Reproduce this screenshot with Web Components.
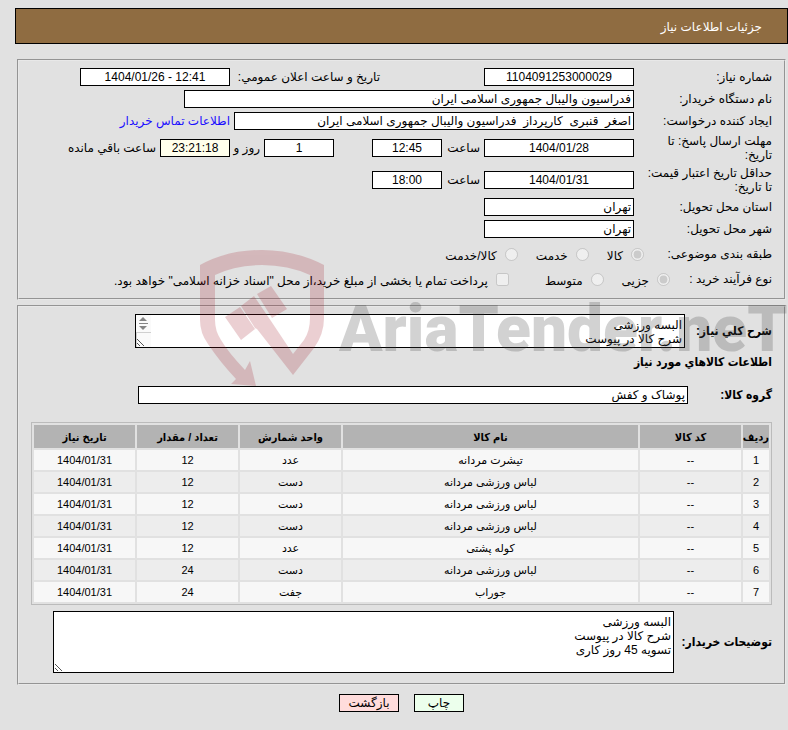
<!DOCTYPE html>
<html lang="fa" dir="rtl">
<head>
<meta charset="utf-8">
<meta name="viewport" content="width=device-width, initial-scale=1">
<title>جزئیات اطلاعات نیاز</title>
<style>
    body{
        --bold-font: Tahoma, "Liberation Sans", "DejaVu Sans Condensed", sans-serif;
        margin: 0;
        background: #e1e1e1;
        color: #000;
        font: 12px/14px Tahoma, "Liberation Sans", "DejaVu Sans", sans-serif;
    }
</style>
</head>
<body>
<need-screen></need-screen>
<script>
const define = (name, html, setup) => {
    const template = document.createElement('template')
    template.innerHTML = html
    window.customElements.define(name, class extends HTMLElement{
        constructor(){
            super()
            this._shadowRoot = this.attachShadow({mode: 'open'})
            this._shadowRoot.appendChild(template.content.cloneNode(true))
        }
        connectedCallback(){
            if(setup) setup(this, this._shadowRoot)
        }
    })
}

define('page-title', `
    <style>
        :host{
            display: block;
            background: #8f6c41;
            border: 1px solid #000;
            padding: 11px 25px 9px;
            color: #fff;
        }
        h1{
            margin: 0;
            font-size: 12px;
            font-weight: normal;
            line-height: 14px;
        }
    </style>
    <h1><slot></slot></h1>
`)

define('field-panel', `
    <style>
        :host{
            display: flex;
            flex-direction: column;
            gap: 4px;
            border: 2px groove #e8e8e8;
            padding: 7px 12px 10px;
        }
    </style>
    <slot></slot>
`)

define('field-row', `
    <style>
        :host{
            display: flex;
            align-items: center;
            gap: 4px;
            min-height: 18px;
        }
        :host([tall]){ min-height: 28px }
        :host([choices]){ gap: 0 }
        :host([category]){ min-height: 24px }
    </style>
    <slot></slot>
`)

// label + text box, label-side="after" puts the label behind the box
define('text-field', `
    <style>
        :host{
            display: flex;
            align-items: center;
            gap: 4px;
        }
        :host([label-side="after"]){ flex-direction: row-reverse }
        :host([label-side="after"]) label{ white-space: nowrap }
        :host([second]){ margin-inline-start: 100px }
        :host([remaining]){ margin-inline-start: 34px }
        :host([strong]) label{
            font-family: var(--bold-font);
            font-weight: bold;
        }
        label{
            flex: none;
            width: var(--label-width);
        }
        input{
            box-sizing: border-box;
            width: var(--field-width);
            min-width: 0;
            height: 18px;
            margin: 0;
            padding: 0 2px;
            border: 1px solid #000;
            border-radius: 0;
            background: #fff;
            color: #000;
            font: inherit;
        }
        :host([numeric]) input{
            direction: ltr;
            text-align: center;
        }
        :host([timer]) input{ background: #ffffec }
    </style>
    <label for="box"></label>
    <input id="box" type="text" readonly>
`, (host, root) => {
    root.querySelector('label').textContent = host.getAttribute('label')
    root.querySelector('input').value = host.getAttribute('value')
    host.style.setProperty('--label-width', (host.getAttribute('label-width') || 134) + 'px')
    host.style.setProperty('--field-width', (host.getAttribute('width') || 150) + 'px')
})

define('text-area', `
    <style>
        :host{
            display: flex;
            align-items: center;
            gap: 4px;
        }
        label{
            flex: none;
            width: var(--label-width);
            font-family: var(--bold-font);
            font-weight: bold;
        }
        .box{
            position: relative;
            display: flex;
            width: var(--field-width);
        }
        textarea{
            box-sizing: border-box;
            width: 100%;
            margin: 0;
            padding: 3px 2px 0;
            border: 1px solid #000;
            border-radius: 0;
            resize: none;
            overflow: hidden;
            background: #fff;
            color: #000;
            font: inherit;
        }
        svg{
            position: absolute;
            left: 1px;
            bottom: 1px;
        }
        .scroll{ display: none }
        :host([scroll]) .scroll{ display: inline }
    </style>
    <label for="box"></label>
    <div class="box">
        <textarea id="box" readonly></textarea>
        <svg width="16" height="32" viewBox="0 0 16 32" aria-hidden="true">
            <g class="scroll">
                <path d="M0 0h15v32H0z" fill="#fafafa"/>
                <path d="M0 17.500h15M.5 18v14" stroke="#d0d0d0" fill="none"/>
                <path d="M3 6L7 2l4 4zM3 11h8l-4 4z" fill="#858585"/>
                <path d="M3 8.500h9" stroke="#858585"/>
            </g>
            <path d="M1 24l7 7M1 28l3 3" stroke="#555" fill="none"/>
        </svg>
    </div>
`, (host, root) => {
    const area = root.querySelector('textarea')
    root.querySelector('label').textContent = host.getAttribute('label')
    area.value = host.getAttribute('value').split('|').join('\n')
    area.style.height = host.getAttribute('height') + 'px'
    host.style.setProperty('--label-width', host.getAttribute('label-width') + 'px')
    host.style.setProperty('--field-width', host.getAttribute('width') + 'px')
})

define('choice-item', `
    <style>
        :host{
            display: flex;
            align-items: center;
            gap: 8px;
            margin-inline-end: 18px;
        }
        :host([apart]){ margin-inline-start: 18px }
        input{
            flex: none;
            width: 13px;
            height: 13px;
            margin: 0;
        }
        label{
            padding-top: 4px;
            white-space: nowrap;
        }
    </style>
    <input id="choice" disabled>
    <label for="choice"><slot></slot></label>
`, (host, root) => {
    const input = root.querySelector('input')
    input.type = host.getAttribute('type') || 'radio'
    input.checked = host.hasAttribute('checked')
})

define('row-caption', `
    <style>
        :host{
            display: block;
            flex: none;
            width: 128px;
        }
        :host([short]){ width: 102px }
    </style>
    <slot></slot>
`)

define('section-title', `
    <style>
        :host{ display: block }
        h2{
            margin: 3px 0 13px;
            font-family: var(--bold-font);
            font-size: 12px;
            line-height: 14px;
        }
    </style>
    <h2><slot></slot></h2>
`)

define('goods-table', `
    <style>
        :host{
            display: block;
            margin: 14px 0 2px;
        }
        table{
            width: 100%;
            table-layout: fixed;
            border: 1px solid #bbb;
            border-collapse: separate;
            border-spacing: 2px;
            font-size: 11px;
            line-height: 14px;
            text-align: center;
        }
        th, td{
            padding: 0;
            height: 20px;
            background: #f7f7f7;
            white-space: nowrap;
        }
        th{
            height: 23px;
            background: #b3b3b3;
            font-family: var(--bold-font);
        }
        tbody tr:nth-child(even) td{ background: #ededed }
        .index{ width: 26px }
        .side{ width: 101px }
    </style>
    <table>
        <colgroup>
            <col class="index"><col class="side"><col><col class="side"><col class="side"><col class="side">
        </colgroup>
        <thead>
            <tr><th>ردیف</th><th>کد کالا</th><th>نام کالا</th><th>واحد شمارش</th><th>تعداد / مقدار</th><th>تاریخ نیاز</th></tr>
        </thead>
        <tbody></tbody>
    </table>
`, (host, root) => {
    const goods = [
        ['تیشرت مردانه', 'عدد', 12],
        ['لباس ورزشی مردانه', 'دست', 12],
        ['لباس ورزشی مردانه', 'دست', 12],
        ['لباس ورزشی مردانه', 'دست', 12],
        ['کوله پشتی', 'عدد', 12],
        ['لباس ورزشی مردانه', 'دست', 24],
        ['جوراب', 'جفت', 24]
    ]
    root.querySelector('tbody').innerHTML = goods.map(([name, unit, count], i) =>
        `<tr><td>${i + 1}</td><td>--</td><td>${name}</td><td>${unit}</td><td>${count}</td><td dir="ltr">1404/01/31</td></tr>`
    ).join('')
})

define('action-button', `
    <style>
        :host{ display: block }
        button{
            box-sizing: border-box;
            width: 50px;
            height: 18px;
            padding: 0;
            border: 1px solid #000;
            border-radius: 0;
            background: #ecffec;
            color: #000;
            font: inherit;
        }
        :host([back]) button{
            width: 60px;
            background: #ffdcdc;
        }
    </style>
    <button type="button"><slot></slot></button>
`)

define('tender-watermark', `
    <style>
        :host{
            position: absolute;
            left: 190px;
            right: 0;
            top: 240px;
            height: 160px;
            overflow: hidden;
            direction: ltr;
            pointer-events: none;
        }
        svg{ display: block }
        text{ font: 900 64px Roboto, "Liberation Sans", sans-serif }
    </style>
    <svg width="598" height="160" viewBox="0 0 598 160">
        <g fill="#a01423" opacity=".2">
            <path d="M10 25Q37 10 72 10Q105 10 134 25V78Q134 94 124 108L103 135L67 89L65 88L51 66L64 56L81 81L103 114L114 100Q120 91 120 78V35Q98 25 72 25Q45 25 25 35V80Q25 91 31 100Q38 112 55 130L60 121L66 146L41 144L46 139Q30 122 18 104Q10 93 10 80Z"/>
            <path d="M35 77L50 67L65 89L51 100ZM67 54L81 46L97 69L82 78Z"/>
        </g>
        <text x="149" y="111" fill="#464646" opacity=".24">AriaTender.neT</text>
    </svg>
`)

define('need-screen', `
    <style>
        :host{
            display: block;
            position: relative;
            padding: 8px 0 18px 15px;
        }
        main{
            display: flex;
            flex-direction: column;
            gap: 5px;
            margin: 15px 2px 9px;
        }
        a{
            color: #1a0dff;
            text-decoration: none;
        }
        footer{
            display: flex;
            justify-content: center;
            gap: 15px;
        }
    </style>
    <page-title>جزئیات اطلاعات نیاز</page-title>
    <main>
        <field-panel>
            <field-row>
                <text-field label="شماره نیاز:" value="1104091253000029" numeric></text-field>
                <text-field label="تاریخ و ساعت اعلان عمومي:" value="1404/01/26 - 12:41" label-width="146" numeric second></text-field>
            </field-row>
            <field-row>
                <text-field label="نام دستگاه خریدار:" value="فدراسیون والیبال جمهوری اسلامی ایران" width="450"></text-field>
            </field-row>
            <field-row>
                <text-field label="ایجاد کننده درخواست:" value="اصغر  قنبری  کارپرداز  فدراسیون والیبال جمهوری اسلامی ایران" width="400"></text-field>
                <a href="#">اطلاعات تماس خریدار</a>
            </field-row>
            <field-row tall>
                <text-field label="مهلت ارسال پاسخ: تا تاریخ:" value="1404/01/28" numeric></text-field>
                <text-field label="ساعت" value="12:45" label-width="34" width="70" numeric></text-field>
                <text-field label="روز و" value="1" label-side="after" label-width="26" width="70" numeric remaining></text-field>
                <text-field label="ساعت باقي مانده" value="23:21:18" label-side="after" label-width="100" width="70" numeric timer></text-field>
            </field-row>
            <field-row tall>
                <text-field label="حداقل تاریخ اعتبار قیمت: تا تاریخ:" value="1404/01/31" numeric></text-field>
                <text-field label="ساعت" value="18:00" label-width="34" width="70" numeric></text-field>
            </field-row>
            <field-row>
                <text-field label="استان محل تحویل:" value="تهران"></text-field>
            </field-row>
            <field-row>
                <text-field label="شهر محل تحویل:" value="تهران"></text-field>
            </field-row>
            <field-row choices category>
                <row-caption>طبقه بندی موضوعی:</row-caption>
                <choice-item checked>کالا</choice-item>
                <choice-item>خدمت</choice-item>
                <choice-item>کالا/خدمت</choice-item>
            </field-row>
            <field-row choices>
                <row-caption short>نوع فرآیند خرید :</row-caption>
                <choice-item checked>جزیی</choice-item>
                <choice-item>متوسط</choice-item>
                <choice-item type="checkbox" apart>پرداخت تمام یا بخشی از مبلغ خرید،از محل "اسناد خزانه اسلامی" خواهد بود.</choice-item>
            </field-row>
        </field-panel>
        <field-panel>
            <text-area label="شرح كلي نیاز:" value="البسه ورزشی|شرح کالا در پیوست" label-width="83" width="550" height="34" scroll></text-area>
            <section-title>اطلاعات كالاهاي مورد نیاز</section-title>
            <text-field label="گروه کالا:" value="پوشاک و کفش" label-width="80" width="550" strong></text-field>
            <goods-table></goods-table>
            <text-area label="توضیحات خریدار:" value="البسه ورزشی|شرح کالا در پیوست|تسویه 45 روز کاری" label-width="94" width="621" height="62"></text-area>
        </field-panel>
    </main>
    <footer>
        <action-button>چاپ</action-button>
        <action-button back>بازگشت</action-button>
    </footer>
    <tender-watermark></tender-watermark>
`)
</script>
</body>
</html>
